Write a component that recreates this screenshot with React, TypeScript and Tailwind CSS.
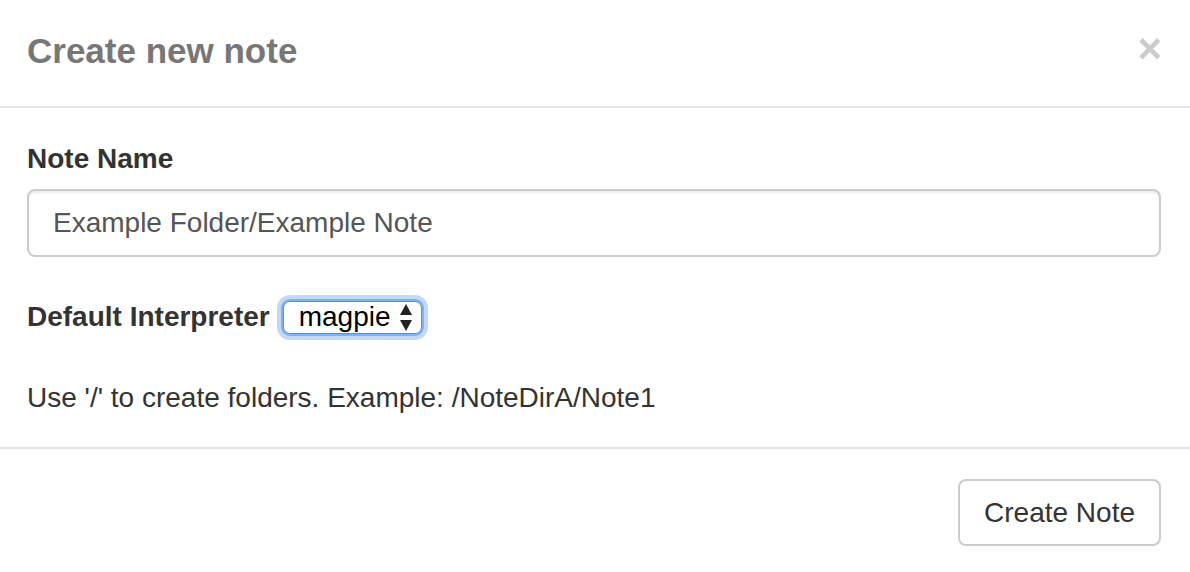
import { useState } from "react";

const CreateNoteModal = () => {
  const [noteName, setNoteName] = useState("Example Folder/Example Note");

  return (
    <div className="w-full h-[572px] bg-white overflow-hidden font-['Liberation_Sans',Arial,sans-serif] text-[#333]">
      {/* Header */}
      <div className="flex items-start justify-between pl-[27px] pr-[29px] pt-[25px] pb-[30px] border-b-2 border-[#e5e5e5]">
        <h4 className="text-[35px] leading-[51px] font-bold text-[#777]">Create new note</h4>
        <button
          className="text-[42px] leading-none font-bold text-black opacity-20 mt-[3px] mr-[-1px]"
          aria-label="Close"
        >
          ×
        </button>
      </div>

      {/* Body */}
      <div className="pl-[27px] pr-[29px] pt-[31px] pb-[29px] text-[28px] leading-[40px]">
        <label className="block font-bold mb-[10px]">Note Name</label>
        <input
          value={noteName}
          onChange={(e) => setNoteName(e.target.value)}
          className="block w-full h-[68px] px-[24px] border-2 border-[#ccc] rounded-[8px] text-[28px] text-[#555] shadow-[inset_0_2px_2px_rgba(0,0,0,0.075)] outline-none"
        />

        <div className="flex items-center mt-[40px]">
          <label className="font-bold">Default Interpreter</label>
          <div className="ml-[13px] flex items-center h-[33px] w-[139px] pl-[15px] pr-[9px] bg-white border border-[#5b8fd6] rounded-[7px] shadow-[0_0_0_2px_#82b1f2,0_0_0_6px_rgba(140,185,245,0.55)] text-black">
            <span className="flex-1 leading-none text-[28px]">magpie</span>
            <svg width="12" height="27" viewBox="0 0 12 27" className="text-[#222]">
              <path d="M6 0 L12 11 L0 11 Z" fill="currentColor" />
              <path d="M0 16 L12 16 L6 27 Z" fill="currentColor" />
            </svg>
          </div>
        </div>

        <p className="mt-[41px]">Use '/' to create folders. Example: /NoteDirA/Note1</p>
      </div>

      {/* Footer */}
      <div className="flex justify-end pl-[27px] pr-[29px] pt-[30px] border-t-2 border-[#e5e5e5]">
        <button className="h-[67px] px-[24px] border-2 border-[#ccc] rounded-[8px] bg-white text-[28px] text-[#333]">
          Create Note
        </button>
      </div>
    </div>
  );
};

export default function App() {
  return <CreateNoteModal />;
}
